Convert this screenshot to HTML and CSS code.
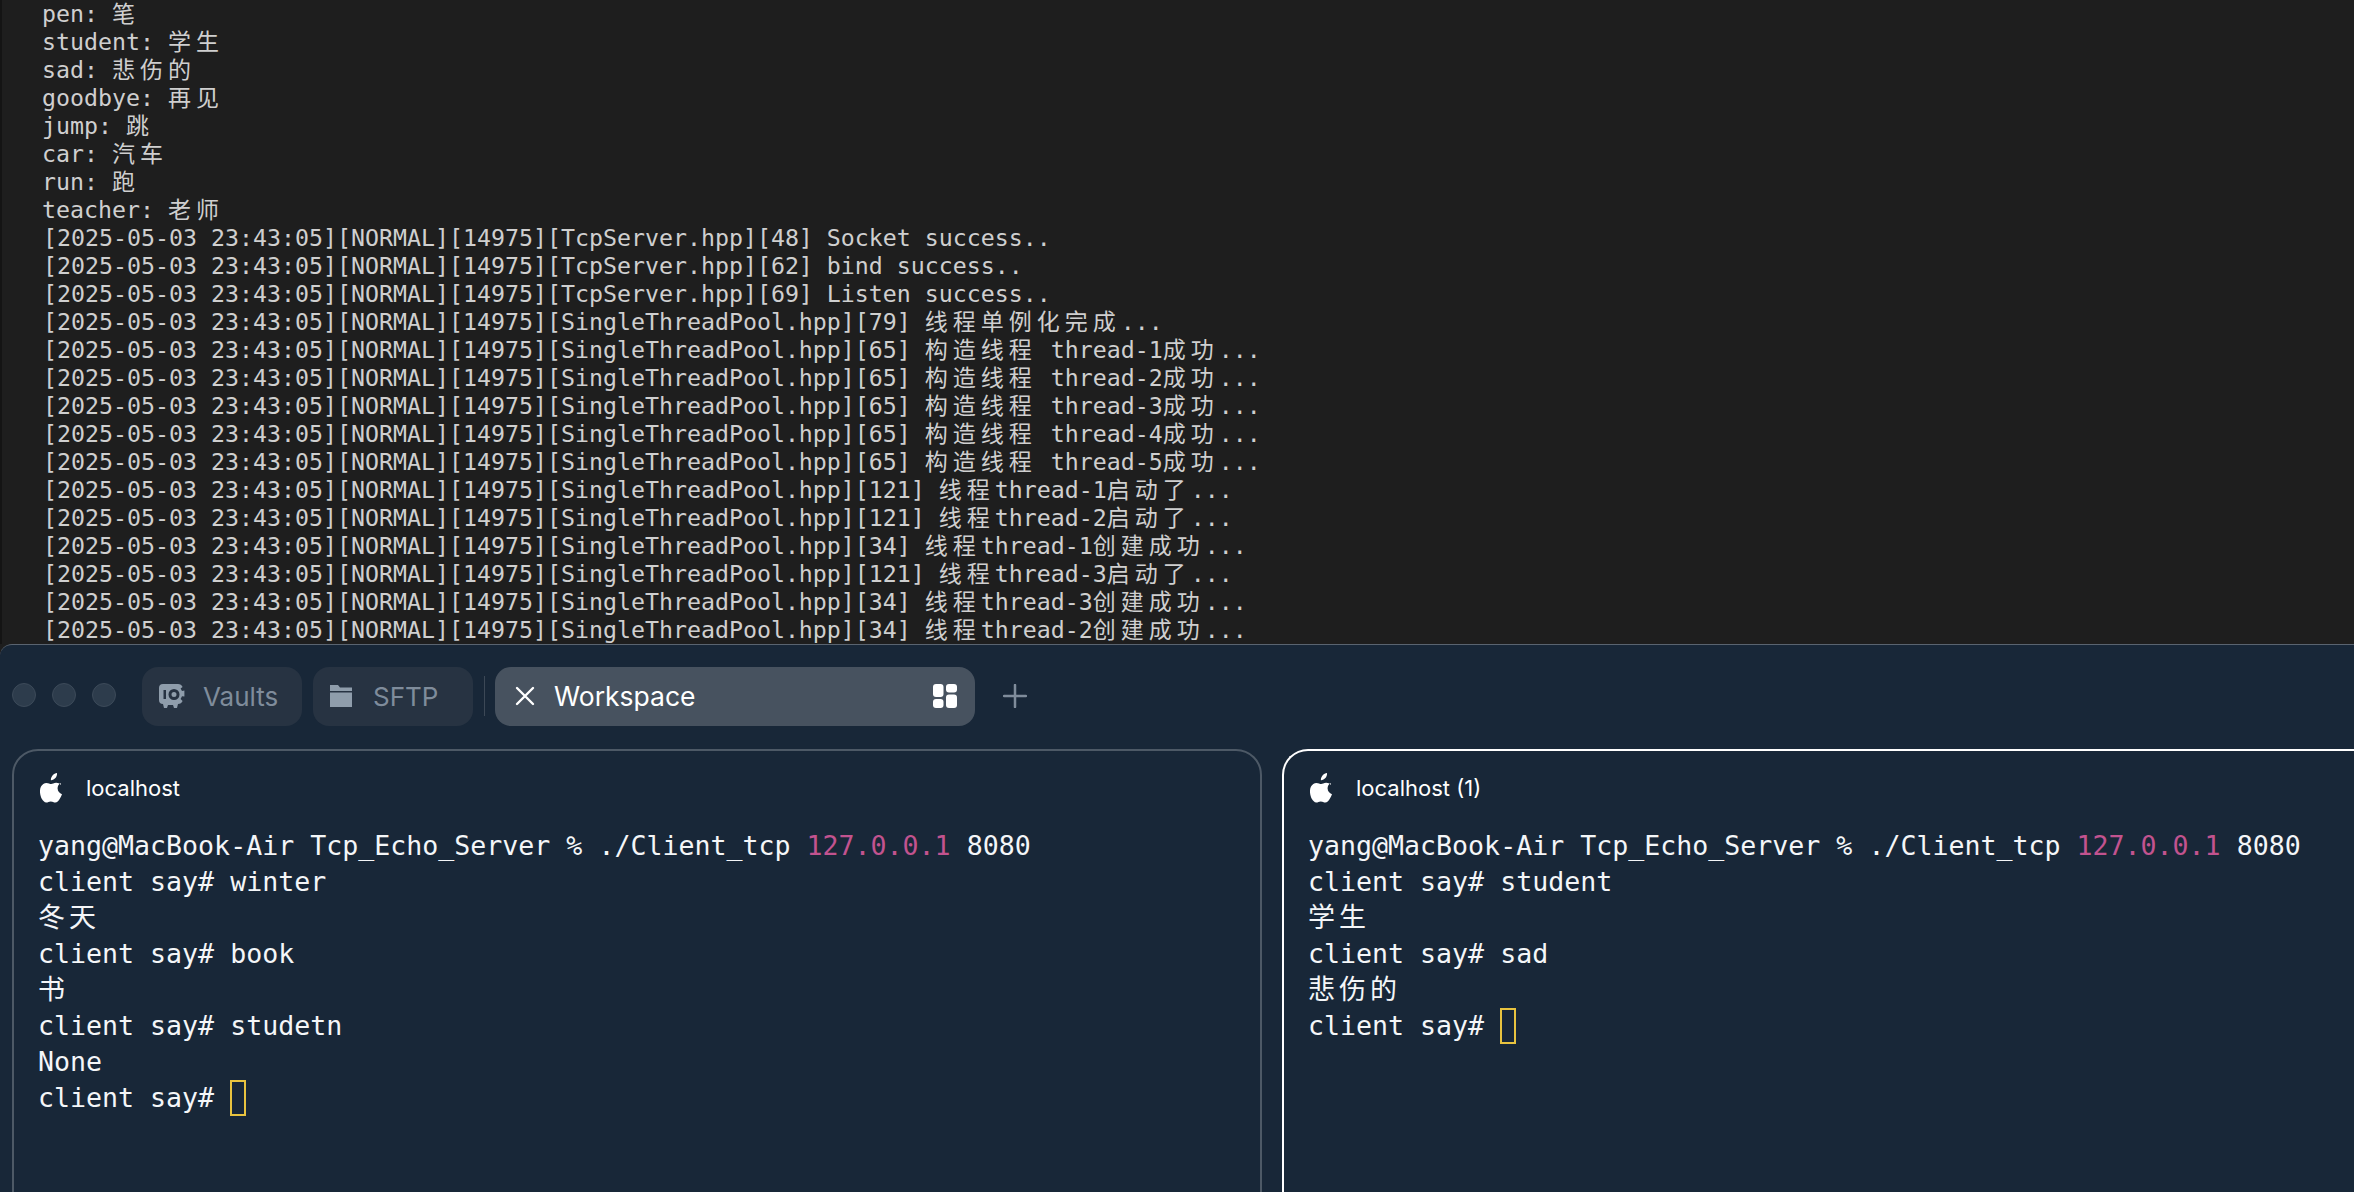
FILE: index.html
```html
<!DOCTYPE html>
<html lang="zh">
<head>
<meta charset="utf-8">
<title>Terminal</title>
<link rel="stylesheet" href="styles.css">
</head>
<body>
<section class="server">
<div class="line word">pen: <span class="cjk">笔</span></div>
<div class="line word">student: <span class="cjk">学生</span></div>
<div class="line word">sad: <span class="cjk">悲伤的</span></div>
<div class="line word">goodbye: <span class="cjk">再见</span></div>
<div class="line word">jump: <span class="cjk">跳</span></div>
<div class="line word">car: <span class="cjk">汽车</span></div>
<div class="line word">run: <span class="cjk">跑</span></div>
<div class="line word">teacher: <span class="cjk">老师</span></div>
<div class="line">[2025-05-03 23:43:05][NORMAL][14975][TcpServer.hpp][48] Socket success..</div>
<div class="line">[2025-05-03 23:43:05][NORMAL][14975][TcpServer.hpp][62] bind success..</div>
<div class="line">[2025-05-03 23:43:05][NORMAL][14975][TcpServer.hpp][69] Listen success..</div>
<div class="line">[2025-05-03 23:43:05][NORMAL][14975][SingleThreadPool.hpp][79] <span class="cjk">线程单例化完成</span>...</div>
<div class="line">[2025-05-03 23:43:05][NORMAL][14975][SingleThreadPool.hpp][65] <span class="cjk">构造线程</span> thread-1<span class="cjk">成功</span>...</div>
<div class="line">[2025-05-03 23:43:05][NORMAL][14975][SingleThreadPool.hpp][65] <span class="cjk">构造线程</span> thread-2<span class="cjk">成功</span>...</div>
<div class="line">[2025-05-03 23:43:05][NORMAL][14975][SingleThreadPool.hpp][65] <span class="cjk">构造线程</span> thread-3<span class="cjk">成功</span>...</div>
<div class="line">[2025-05-03 23:43:05][NORMAL][14975][SingleThreadPool.hpp][65] <span class="cjk">构造线程</span> thread-4<span class="cjk">成功</span>...</div>
<div class="line">[2025-05-03 23:43:05][NORMAL][14975][SingleThreadPool.hpp][65] <span class="cjk">构造线程</span> thread-5<span class="cjk">成功</span>...</div>
<div class="line">[2025-05-03 23:43:05][NORMAL][14975][SingleThreadPool.hpp][121] <span class="cjk">线程</span>thread-1<span class="cjk">启动了</span>...</div>
<div class="line">[2025-05-03 23:43:05][NORMAL][14975][SingleThreadPool.hpp][121] <span class="cjk">线程</span>thread-2<span class="cjk">启动了</span>...</div>
<div class="line">[2025-05-03 23:43:05][NORMAL][14975][SingleThreadPool.hpp][34] <span class="cjk">线程</span>thread-1<span class="cjk">创建成功</span>...</div>
<div class="line">[2025-05-03 23:43:05][NORMAL][14975][SingleThreadPool.hpp][121] <span class="cjk">线程</span>thread-3<span class="cjk">启动了</span>...</div>
<div class="line">[2025-05-03 23:43:05][NORMAL][14975][SingleThreadPool.hpp][34] <span class="cjk">线程</span>thread-3<span class="cjk">创建成功</span>...</div>
<div class="line">[2025-05-03 23:43:05][NORMAL][14975][SingleThreadPool.hpp][34] <span class="cjk">线程</span>thread-2<span class="cjk">创建成功</span>...</div>
</section>
<section class="client">
<header class="tabbar">
<div class="lights"><i class="light"></i><i class="light"></i><i class="light"></i></div>
<div class="tab"><svg class="tab-icon" viewBox="0 0 28 28"><path fill="#8f9dab" fill-rule="evenodd" d="M5 2h15a5 5 0 0 1 4.600 3l-2 1.600 1.400 2.400 2.400-.4v6l-2.400-.4L22.600 17l2 2a5 5 0 0 1-4.600 3l-1 4h-3l-1-3H10l-1 3H6l-1-4a4 4 0 0 1-4-4V6a4 4 0 0 1 4-4ZM16 7a5.500 5.500 0 1 0 0 11a5.500 5.500 0 0 0 0-11Zm0 3a2.500 2.500 0 1 1 0 5a2.500 2.500 0 0 1 0-5ZM5.500 8v9h2.500V8Z"/></svg><span>Vaults</span></div>
<div class="tab"><svg class="tab-icon" viewBox="0 0 24 26"><path fill="#8f9dab" d="M1 2h8l2 2.500h12V8H1V2Zm0 7.500h22V24H1Z"/></svg><span>SFTP</span></div>
<div class="sep"></div>
<div class="tab tab-active"><svg class="close" viewBox="0 0 20 20"><path d="M2 2l16 16M18 2L2 18" stroke="#fff" stroke-width="2.400" stroke-linecap="round" fill="none"/></svg><span class="tab-title">Workspace</span><svg class="grid" viewBox="0 0 24 24"><rect x="0" y="0" width="10.500" height="13" rx="3" fill="#fff"/><rect x="13" y="0" width="11" height="8.500" rx="3" fill="#fff"/><rect x="0" y="15" width="10.500" height="9" rx="3" fill="#fff"/><rect x="13" y="10.500" width="11" height="13.500" rx="3" fill="#fff"/></svg></div>
<svg class="plus" viewBox="0 0 24 24"><path d="M12 1v22M1 12h22" stroke="#7f8c9b" stroke-width="2.500" stroke-linecap="round" fill="none"/></svg>
</header>
<div class="panes">
<article class="pane">
<div class="pane-head"><svg class="apple" viewBox="0 0 25 30"><path fill="#fff" d="M17 0c.2 2-.5 3.700-1.600 5-1.100 1.300-2.800 2.300-4.500 2.200-.2-1.800.6-3.600 1.600-4.800C13.600 1.100 15.500.1 17 0Zm3.800 10c-2.300 1.500-3.300 3.200-3.200 5.500.1 2.800 1.900 4.700 4.400 5.700-.6 1.800-1.400 3.400-2.500 5-1.100 1.600-2.300 3.400-4.200 3.400-1.800 0-2.400-1.100-4.500-1.100s-2.800 1.100-4.500 1.100c-1.900 0-3.300-1.900-4.400-3.500C.2 22.800-1 17.500 1 13.600c1.100-2.200 3.200-3.700 5.500-3.700 1.800 0 3.500 1.200 4.700 1.200 1.100 0 3-1.400 5.100-1.300 1.800 0 3.300.7 4.500 2.200Z"/></svg><span>localhost</span></div>
<div class="term">
<div class="row">yang@MacBook-Air Tcp_Echo_Server % ./Client_tcp <span class="pink">127.0.0.1</span> 8080</div>
<div class="row">client say# winter</div>
<div class="row"><span class="wide">冬天</span></div>
<div class="row">client say# book</div>
<div class="row"><span class="wide">书</span></div>
<div class="row">client say# studetn</div>
<div class="row">None</div>
<div class="row">client say# <i class="cursor"></i></div>
</div>
</article>
<article class="pane pane-focus">
<div class="pane-head"><svg class="apple" viewBox="0 0 25 30"><path fill="#fff" d="M17 0c.2 2-.5 3.700-1.600 5-1.100 1.300-2.800 2.300-4.500 2.200-.2-1.800.6-3.600 1.600-4.800C13.600 1.100 15.500.1 17 0Zm3.800 10c-2.300 1.500-3.300 3.200-3.200 5.500.1 2.800 1.900 4.700 4.400 5.700-.6 1.800-1.400 3.400-2.500 5-1.100 1.600-2.300 3.400-4.200 3.400-1.800 0-2.400-1.100-4.500-1.100s-2.800 1.100-4.500 1.100c-1.900 0-3.300-1.900-4.400-3.500C.2 22.800-1 17.500 1 13.600c1.100-2.200 3.200-3.700 5.500-3.700 1.800 0 3.500 1.200 4.700 1.200 1.100 0 3-1.400 5.100-1.300 1.800 0 3.300.7 4.500 2.200Z"/></svg><span>localhost (1)</span></div>
<div class="term">
<div class="row">yang@MacBook-Air Tcp_Echo_Server % ./Client_tcp <span class="pink">127.0.0.1</span> 8080</div>
<div class="row">client say# student</div>
<div class="row"><span class="wide">学生</span></div>
<div class="row">client say# sad</div>
<div class="row"><span class="wide">悲伤的</span></div>
<div class="row">client say# <i class="cursor"></i></div>
</div>
</article>
</div>
</section>
</body>
</html>
```
FILE: styles.css
```css
* { box-sizing: border-box; }
html, body { margin: 0; height: 100%; }
body { width: 2354px; height: 1192px; overflow: hidden; background: #1e1e1e; display: flex; flex-direction: column; }

.server { height: 644px; flex: none; padding-left: 40px; background: #1e1e1e; border-left: 2px solid #141414; overflow: hidden; font: 23.25px/28px "DejaVu Sans Mono", "Noto Sans CJK SC", monospace; color: #cfcfcf; }
.line { height: 28px; padding-left: 1px; white-space: pre; overflow: hidden; }
.word { padding-left: 0; }
.cjk { font-family: "Noto Sans CJK SC", sans-serif; font-size: 23px; line-height: 1; letter-spacing: 5px; }

.client { flex: 1; min-height: 0; background: #182738; border-top: 1.500px solid #5a6470; border-top-left-radius: 12px; overflow: hidden; }
.tabbar { display: flex; align-items: center; height: 104px; padding: 0 0 2px 11px; }
.lights { display: flex; gap: 16px; width: 131px; margin: -2px 0 0 1px; margin-right: -1px; }
.light { width: 24px; height: 24px; border-radius: 50%; background: #2d3c4c; border: 1.500px solid #3c4a59; }
.tab { display: flex; align-items: center; height: 59px; width: 160px; margin-right: 11px; padding-left: 16px; border-radius: 16px; background: #273342; color: #7f8c9b; font: 26px "Inter", sans-serif; }
.tab-icon { width: 28px; height: 28px; margin-right: 17px; flex: none; }
.tab + .tab .tab-icon { width: 24px; height: 26px; margin-right: 20px; }
.sep { width: 1px; height: 40px; background: #3c4856; margin-right: 10px; }
.tab-active { width: 480px; margin-right: 0; padding: 0 18px 0 20px; background: #47525f; color: #fff; }
.close { width: 20px; height: 20px; margin-right: 19px; flex: none; }
.tab-title { flex: 1; font-size: 26.500px; }
.grid { width: 24px; height: 24px; flex: none; }
.plus { width: 24px; height: 24px; margin-left: 28px; }

.panes { display: flex; padding-left: 12px; gap: 20px; }
.pane { flex: none; width: 1250px; height: 560px; border: 2px solid #4d5966; border-radius: 26px 26px 0 0; padding: 21px 0 0 24px; color: #f4f6f8; }
.pane-focus { width: 1100px; border-color: #fff; border-right: 0; }
.pane-head { display: flex; align-items: center; height: 32px; font: 22px "Inter", sans-serif; color: #fff; }
.apple { width: 25px; height: 30px; margin: 0 21px 0 2px; flex: none; }
.term { margin-top: 24px; font: 26.600px/36px "DejaVu Sans Mono", "Noto Sans CJK SC", monospace; }
.row { height: 36px; white-space: pre; }
.pink { color: #c2538f; }
.wide { font-family: "Noto Sans CJK SC", sans-serif; font-size: 27px; line-height: 1; letter-spacing: 4px; }
.cursor { display: inline-block; width: 16px; height: 36px; border: 2px solid #e8c33f; vertical-align: top; }
```
